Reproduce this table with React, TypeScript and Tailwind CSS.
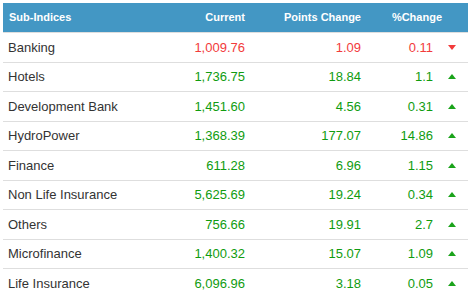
const rows = [
  { name: "Banking", current: "1,009.76", points: "1.09", pct: "0.11", up: false },
  { name: "Hotels", current: "1,736.75", points: "18.84", pct: "1.1", up: true },
  { name: "Development Bank", current: "1,451.60", points: "4.56", pct: "0.31", up: true },
  { name: "HydroPower", current: "1,368.39", points: "177.07", pct: "14.86", up: true },
  { name: "Finance", current: "611.28", points: "6.96", pct: "1.15", up: true },
  { name: "Non Life Insurance", current: "5,625.69", points: "19.24", pct: "0.34", up: true },
  { name: "Others", current: "756.66", points: "19.91", pct: "2.7", up: true },
  { name: "Microfinance", current: "1,400.32", points: "15.07", pct: "1.09", up: true },
  { name: "Life Insurance", current: "6,096.96", points: "3.18", pct: "0.05", up: true },
];

function Arrow({ up }: { up: boolean }) {
  return (
    <svg width="8" height="5" viewBox="0 0 8 5" className="block">
      {up ? (
        <polygon points="4,0 8,5 0,5" fill="#1aa31a" />
      ) : (
        <polygon points="0,0 8,0 4,5" fill="#f23b3b" />
      )}
    </svg>
  );
}

export default function App() {
  return (
    <div className="w-[468px] h-[292px] bg-white overflow-hidden pl-[3px] pt-[3px] font-['Liberation_Sans',Arial,sans-serif]">
      <div className="flex items-center h-[30px] bg-[#4397c4] text-white text-[11px] font-bold border-b border-[#dedede]">
        <div className="w-[165px] pl-[6px]">Sub-Indices</div>
        <div className="w-[77px] text-right">Current</div>
        <div className="w-[116px] text-right">Points Change</div>
        <div className="w-[81px] text-right">%Change</div>
      </div>
      {rows.map((r) => {
        const color = r.up ? "text-[#109c10]" : "text-[#f23b3b]";
        return (
          <div key={r.name} className="flex items-center h-[29.5px] border-b border-[#dedede] text-[13px]">
            <div className="w-[165px] pl-[5px] text-[#333]">{r.name}</div>
            <div className={`w-[77px] text-right ${color}`}>{r.current}</div>
            <div className={`w-[116px] text-right ${color}`}>{r.points}</div>
            <div className={`w-[72px] text-right ${color}`}>{r.pct}</div>
            <div className="flex-1 flex justify-center pl-[3px]">
              <Arrow up={r.up} />
            </div>
          </div>
        );
      })}
    </div>
  );
}
